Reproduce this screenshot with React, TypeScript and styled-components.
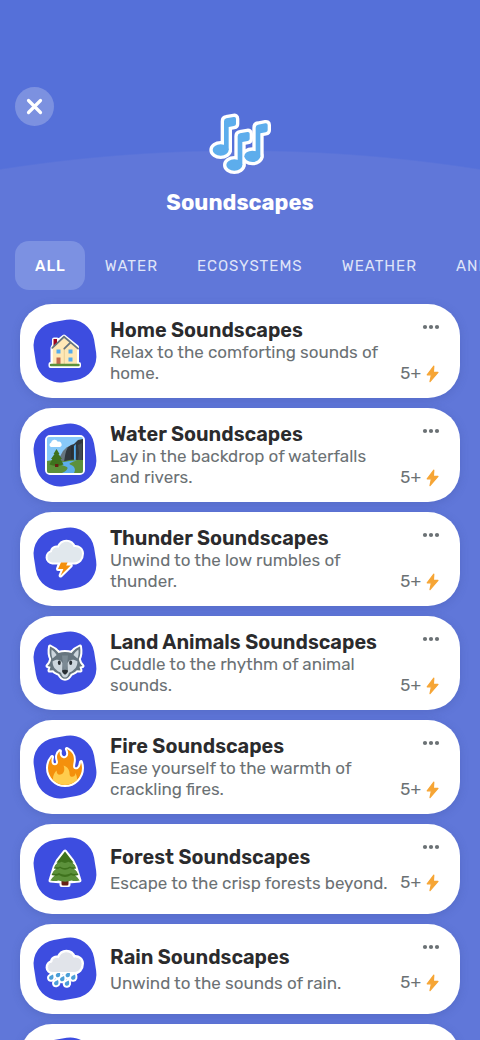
import React from "react";
import styled, { createGlobalStyle } from "styled-components";

const GlobalStyle = createGlobalStyle`
  *, *::before, *::after { box-sizing: border-box; }
  body {
    margin: 0;
    font-family: Rubik, Inter, "Liberation Sans", sans-serif;
    -webkit-font-smoothing: antialiased;
  }
  button { font: inherit; color: inherit; border: 0; padding: 0; cursor: pointer; }
`;

const Page = styled.main`
  display: flex;
  flex-direction: column;
  height: 100vh;
  overflow: hidden;
  background: radial-gradient(circle 1550px at 50% 1700px, #6077d9 99.9%, #5570d9 100%);
`;

const Header = styled.header`
  display: grid;
  grid-template-columns: 39px 1fr 39px;
  padding: 87px 15px 0;
`;

const CloseButton = styled.button`
  display: grid;
  place-items: center;
  width: 39px;
  height: 39px;
  border-radius: 50%;
  background: #7c91e0;
`;

const Heading = styled.div`
  display: flex;
  flex-direction: column;
  align-items: center;
  gap: 14px;
  padding-top: 26px;
`;

const PageTitle = styled.h1`
  margin: 0;
  color: #fff;
  font-size: 22px;
  font-weight: 700;
  line-height: 28px;
`;

const Tabs = styled.nav`
  display: flex;
  flex: none;
  margin-top: 24px;
  padding-left: 15px;
  overflow: hidden;
`;

const Tab = styled.button<{ $active?: boolean }>`
  flex: none;
  height: 49px;
  padding: 0 19px 0 20px;
  border-radius: 14px;
  background: ${(p) => (p.$active ? "#7c91e2" : "transparent")};
  color: ${(p) => (p.$active ? "#fff" : "#dfe4f8")};
  font-size: 15px;
  font-weight: ${(p) => (p.$active ? 500 : 400)};
  line-height: 20px;
  letter-spacing: 1px;
`;

const List = styled.ul`
  display: flex;
  flex: 1;
  flex-direction: column;
  gap: 10px;
  min-height: 0;
  margin: 0;
  padding: 14px 20px;
  overflow-y: auto;
  scrollbar-width: none;
  list-style: none;
`;

const Card = styled.li`
  display: flex;
  flex: none;
  align-items: center;
  min-height: 90px;
  padding: 14px 20px 14px 13px;
  border-radius: 32px;
  background: #fff;
  box-shadow: 0 2px 8px rgba(60, 80, 160, 0.3);
`;

const Badge = styled.svg`
  flex: none;
  width: 64px;
  height: 62px;
  overflow: visible;
`;

const CardText = styled.div<{ $compact?: boolean }>`
  display: flex;
  flex: 1;
  flex-direction: column;
  gap: ${(p) => (p.$compact ? 4 : 0)}px;
  min-width: 0;
  margin: 0 8px 0 13px;
`;

const CardTitle = styled.h2`
  margin: 0;
  color: #2b2b2d;
  font-size: 20px;
  font-weight: 600;
  line-height: 24px;
`;

const Description = styled.p`
  margin: 0;
  color: #6b7174;
  font-size: 17px;
  line-height: 21px;
`;

const Side = styled.div<{ $compact?: boolean }>`
  display: flex;
  flex: none;
  flex-direction: column;
  align-items: flex-end;
  justify-content: space-between;
  align-self: stretch;
  padding-bottom: ${(p) => (p.$compact ? 7 : 0)}px;
`;

const MoreButton = styled.button`
  display: flex;
  align-items: center;
  height: 18px;
  background: none;
`;

const Reward = styled.span`
  display: flex;
  align-items: center;
  gap: 5px;
  color: #6b7174;
  font-size: 17px;
  line-height: 21px;
`;

function Sticker({ outline, children }: { outline: React.ReactNode; children?: React.ReactNode }) {
  return (
    <>
      <g fill="#fff" stroke="#fff" strokeWidth="4" strokeLinejoin="round">{outline}</g>
      {children}
    </>
  );
}

function House() {
  return (
    <Sticker outline={<path d="M3.5 31V33H32V31H30V14L17 3.5 10 9V6.5H7V12L5.5 15V31Z" />}>
      <path d="M6.5 6H10V12L6.5 14Z" fill="#a0041e" />
      <path d="M5.8 15 17 4.5 30 15.5V31H5.8Z" fill="#ffe8b6" />
      <path d="M17.3 15.5 23 10l7 6V31H17.3Z" fill="#ffe8b6" />
      <path d="M17.3 15.5V31" stroke="#e5c98f" strokeWidth=".8" />
      <path d="M5.3 14.8 17 3.8 31 15.6M17.3 15.6 23.4 9.6" fill="none" stroke="#66757f" strokeWidth="1.8" strokeLinecap="round" />
      <path d="M9.5 16.5h4V20.5h-4ZM21.5 16.5h4V20.5h-4ZM21.5 24.5h4V28.5h-4Z" fill="#55acee" />
      <path d="M9.5 24.5h4V31h-4Z" fill="#c1694f" />
      <path d="M4 30.8H31.5a1.2 1.2 0 0 1 0 2.4H4a1.2 1.2 0 0 1 0-2.4Z" fill="#5c913b" />
    </Sticker>
  );
}

function Landscape() {
  return (
    <Sticker outline={<rect width="36" height="36" rx="3" />}>
      <rect width="36" height="36" rx="2" fill="#88c9f9" />
      <path d="M4 10a2.2 2.2 0 0 1 0-4.2 3.6 3.6 0 0 1 6.8-1 2.7 2.7 0 0 1 2 5.2Z" fill="#fff" />
      <path d="M10 25 16 14l4-4 6-1 5-2v18Z" fill="#66757f" />
      <path d="M17 25c1-5 1-10 4-15l3-2 3-1 4-4 5-1v23Z" fill="#31373d" />
      <path d="M24 24V10l2-2v16Z" fill="#292f33" />
      <path d="M27 24V9l1.8-2V24Z" fill="#55acee" />
      <path d="M31 8l1 8-1 7 4 1V6Z" fill="#414b52" />
      <path d="M0 24c8-2 13 1 18 0 6-2 12-1 18-1v11a2 2 0 0 1-2 2H2a2 2 0 0 1-2-2Z" fill="#5c913b" />
      <path d="M28 23.5c-6 1-14 1-14 3 0 3 9 2 6 6-1 1.5-3 2.5-5 3.5h12c2-3 1-7-4-8.5-2-1 2-2.5 7-4Z" fill="#5dadec" />
      <path d="M9.5 12 6.5 17h1L4 22h1.3L2.5 27.5c4 1.8 10 1.8 14 0L13.5 22H15l-3.5-5h1Z" fill="#3e721d" />
      <path d="M8 27h3.400v3H8Z" fill="#662113" />
    </Sticker>
  );
}

const cloud = (
  <path d="M5.5 21.5a5.3 5.3 0 0 1-.6-10.5C5 7.5 8.5 5.6 11.6 6.8 13 3 16 .8 19.4.8c3.6 0 6.4 2.3 7.3 5.4 4.8-.9 8.3 2.2 8.3 6.3 0 5.5-3.5 9-8 9Z" />
);

const bolt = <path d="M14 19.5h7.6l-2.4 5h4.6L13.6 34.5l2.8-6.500h-5.400Z" />;

function Thunder() {
  return (
    <Sticker outline={<>{cloud}{bolt}</>}>
      <g fill="#e1e8ed">{cloud}</g>
      <path d="M14 21.500h6.600l-1.400 3h4.600L13.600 34.500l2.800-6.500h-5.400Z" fill="#f4900c" />
    </Sticker>
  );
}

const rainDrops = [[10.7, 23.5], [20.5, 23.5], [4, 26], [15, 27.5], [26, 26], [9, 31.5], [19.7, 32]];

function Rain() {
  const drops = rainDrops.map(([x, y]) => (
    <path key={`${x}-${y}`} d={`M${x + 2} ${y - 2.5}c.9 2.5.6 5-1.6 5.3-2.6.3-3.2-2.8-.9-4Z`} />
  ));
  return (
    <Sticker outline={<>{cloud}{drops}</>}>
      <g fill="#4b9fd8">{drops}</g>
      <g fill="#e1e4ea" stroke="#fff" strokeWidth="1">{cloud}</g>
    </Sticker>
  );
}

const wolfHead = (
  <path d="M3 1.5C5.5 2.5 9 4.5 11.5 8c4-1.3 9-1.3 13 0C27 4.5 30.5 2.5 33 1.5c.8 4.5.5 9-1.2 12.5.5 3 1.7 5 3.7 7l-3 .8 1 3.7-3.7-.3c-1.5 2-4 2.8-6 3.8-1.2 2.5-3 4.8-5.8 4.800s-4.600-2.300-5.800-4.800c-2-1-4.500-1.800-6-3.800l-3.700.3 1-3.700-3-.8c2-2 3.200-4 3.700-7C2.500 10.500 2.200 6 3 1.500Z" />
);

function Wolf() {
  return (
    <Sticker outline={wolfHead}>
      <g fill="#66757f">{wolfHead}</g>
      <path d="M4.6 4.5C6.8 6 8.5 7.8 9.6 10L5.5 13.5C4.3 10.5 4.2 7.5 4.6 4.5ZM31.4 4.5C29.2 6 27.5 7.8 26.4 10l4.1 3.5c1.2-3 1.3-6 .9-9Z" fill="#ccd6dd" />
      <path d="M5.5 16.5c4-3 8.5-2 10 1.5l-.3 7.5L18 29l2.8-3.5-.3-7.5c1.5-3.5 6-4.5 10-1.5-.2 3.5-1 6-3.5 8-1.5 2-4 2.5-5 3.5-1 3-2 4.5-4 4.5s-3-1.5-4-4.500c-1-1-3.500-1.500-5-3.500-2.500-2-3.300-4.500-3.500-8Z" fill="#ccd6dd" />
      <path d="M15 10.5h6L19.5 26h-3Z" fill="#7b8a94" />
      <ellipse cx="12.3" cy="17.8" rx="1.5" ry="2.3" fill="#292f33" />
      <ellipse cx="23.7" cy="17.8" rx="1.5" ry="2.3" fill="#292f33" />
      <path d="M15 25.5c1.5-1 4.5-1 6 0 0 2-1.5 3.6-3 4.2-1.5-.6-3-2.2-3-4.2Z" fill="#292f33" />
    </Sticker>
  );
}

const flame = (
  <path d="M35 19c0-2.062-.367-4.039-1.04-5.868-.46 5.389-3.333 8.157-6.335 6.868-2.812-1.208-.917-5.917-.777-8.164.236-3.809-.012-8.169-6.931-11.794 2.875 5.5.333 8.917-2.333 9.125-2.958.231-5.667-2.542-4.667-7.042-3.238 2.386-3.332 6.402-2.333 9 1.042 2.708-.042 4.958-2.583 5.208-2.84.28-4.418-3.041-2.963-8.333C2.52 10.965 1 14.805 1 19c0 9.389 7.611 17 17 17s17-7.611 17-17z" />
);

function Fire() {
  return (
    <Sticker outline={flame}>
      <g fill="#f4900c">{flame}</g>
      <path d="M28.394 23.999c.148 3.084-2.561 4.293-4.019 3.709-2.106-.843-1.541-2.291-2.083-5.291s-2.625-5.083-5.708-6c2.25 6.333-1.247 8.667-3.08 9.084-1.872.426-3.753-.001-3.968-4.007C7.352 23.668 6 26.676 6 30c0 .368.023.73.055 1.09C9.125 34.124 13.342 36 18 36s8.875-1.876 11.945-4.91c.032-.36.055-.722.055-1.09 0-2.187-.584-4.236-1.606-6.001z" fill="#ffcc4d" />
    </Sticker>
  );
}

function Tree() {
  return (
    <Sticker outline={<path d="M18 .5 11 9.5 7.5 16.5 5.5 23 3.5 29.5l11 1V34h7v-3.5l11-1L30.5 23l-2-6.5L25 9.5Z" />}>
      <path d="M14.5 27h7v6a1.5 1.5 0 0 1-1.5 1.5h-4a1.5 1.5 0 0 1-1.5-1.5Z" fill="#662113" />
      <path d="M18 15 5.5 26.5 3.3 29.5c4 .8 6 .8 8 0 4.5 1.5 9 1.5 13.4 0 2 .8 4 .8 8 0L30.5 26.5Z" fill="#5c913b" />
      <path d="M18 10 6.5 20.5 4.5 24c3.5 1 5.5 1 7.5 0 4 2.5 8 2.5 12 0 2 1 4 1 7.500 0l-2-3.500Z" fill="#3e721d" />
      <path d="M18 10 6.8 20 5.3 22.5c3 .7 5 .5 6.7-.5 4 2.3 8 2.3 12 0 1.7 1 3.7 1.2 6.7.5L29.2 20Z" fill="#5c913b" />
      <path d="M18 5 8.5 14 6.8 17.5c3 .7 4.5.5 6.2-.5 3.5 2.3 6.5 2.3 10 0 1.7 1 3.2 1.2 6.2.5L27.5 14Z" fill="#3e721d" />
      <path d="M18 5 9 13.5 7.5 16c2.5.6 4 .4 5.5-.5 3.5 2 6.5 2 10 0 1.5.9 3 1.1 5.5.5L27 13.5Z" fill="#5c913b" />
      <path d="M18 .5 9.5 11.5c2 .5 3.5.3 5-.7 2.5 1.5 4.5 1.5 7 0 1.5 1 3 1.2 5 .7Z" fill="#3e721d" />
    </Sticker>
  );
}

const note = (
  <>
    <path d="M672 152Q672 144 679 143L701 139Q708 138 708 144V160Q708 165 702 166L686 169V238H672Z" />
    <ellipse cx="662" cy="238" rx="24" ry="17" />
  </>
);

function MusicNotes() {
  const notes = (
    <>
      <g>{note}</g>
      <g transform="translate(41 45)">{note}</g>
      <g transform="translate(95 19)">{note}</g>
    </>
  );
  return (
    <svg width="62" height="62" viewBox="627 127 186 186" aria-hidden="true">
      <g fill="#fff" stroke="#fff" strokeWidth="20" strokeLinejoin="round">{notes}</g>
      <g fill="#5dadec">{notes}</g>
    </svg>
  );
}

type Soundscape = { title: string; text: string; icon: React.ReactNode; compact?: boolean };

const soundscapes: Soundscape[] = [
  { title: "Home Soundscapes", text: "Relax to the comforting sounds of home.", icon: <House /> },
  { title: "Water Soundscapes", text: "Lay in the backdrop of waterfalls and rivers.", icon: <Landscape /> },
  { title: "Thunder Soundscapes", text: "Unwind to the low rumbles of thunder.", icon: <Thunder /> },
  { title: "Land Animals Soundscapes", text: "Cuddle to the rhythm of animal sounds.", icon: <Wolf /> },
  { title: "Fire Soundscapes", text: "Ease yourself to the warmth of crackling fires.", icon: <Fire /> },
  { title: "Forest Soundscapes", text: "Escape to the crisp forests beyond.", icon: <Tree />, compact: true },
  { title: "Rain Soundscapes", text: "Unwind to the sounds of rain.", icon: <Rain />, compact: true },
];

const tabs = ["ALL", "WATER", "ECOSYSTEMS", "WEATHER", "ANIMALS"];

function IconBadge({ children }: { children?: React.ReactNode }) {
  return (
    <Badge viewBox="0 0 64 62" aria-hidden="true">
      <rect x="1.5" y=".5" width="61" height="61" rx="24" fill="#3d4de0" transform="rotate(-9 32 31)" />
      <g transform="translate(14 13)">{children}</g>
    </Badge>
  );
}

function SoundscapeCard({ title, text, icon, compact }: Soundscape) {
  return (
    <Card>
      <IconBadge>{icon}</IconBadge>
      <CardText $compact={compact}>
        <CardTitle>{title}</CardTitle>
        <Description>{text}</Description>
      </CardText>
      <Side $compact={compact}>
        <MoreButton aria-label={`More options for ${title}`}>
          <svg width="18" height="6" viewBox="0 0 18 6" fill="#6b7174">
            <circle cx="3" cy="3" r="2.1" />
            <circle cx="9" cy="3" r="2.1" />
            <circle cx="15" cy="3" r="2.1" />
          </svg>
        </MoreButton>
        <Reward>
          5+
          <svg width="14" height="18" viewBox="0 0 14 18" aria-hidden="true">
            <path d="M7.8 1.2 1.2 9.8H5.400L4 16.600 12 7.400H7.400Z" fill="#f6a535" stroke="#f6a535" strokeWidth="1.2" strokeLinejoin="round" />
          </svg>
        </Reward>
      </Side>
    </Card>
  );
}

export default function App() {
  return (
    <>
      <GlobalStyle />
      <Page>
        <Header>
          <CloseButton aria-label="Close">
            <svg width="17" height="17" viewBox="0 0 17 17">
              <path d="M2.5 2.5 14.5 14.5M14.5 2.5 2.5 14.5" stroke="#fff" strokeWidth="3.2" strokeLinecap="round" />
            </svg>
          </CloseButton>
          <Heading>
            <MusicNotes />
            <PageTitle>Soundscapes</PageTitle>
          </Heading>
        </Header>
        <Tabs aria-label="Categories">
          {tabs.map((label, i) => (
            <Tab key={label} $active={i === 0}>{label}</Tab>
          ))}
        </Tabs>
        <List>
          {soundscapes.map((item) => (
            <SoundscapeCard key={item.title} {...item} />
          ))}
          <Card>
            <IconBadge />
          </Card>
        </List>
      </Page>
    </>
  );
}
